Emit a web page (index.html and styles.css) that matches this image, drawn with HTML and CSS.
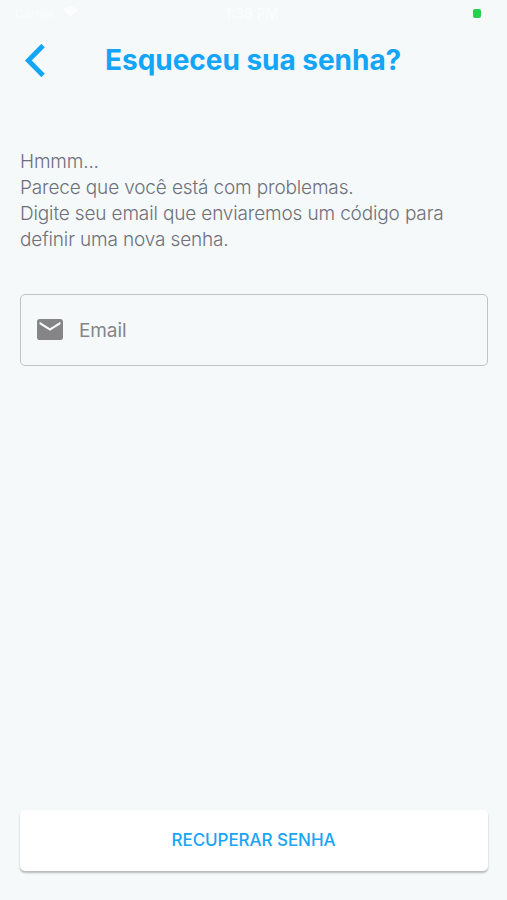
FILE: index.html
```html
<!DOCTYPE html>
<html lang="pt-BR">
<head>
<meta charset="utf-8">
<title>Esqueceu sua senha?</title>
<link rel="stylesheet" href="styles.css">
</head>
<body>
<div class="status"><span class="carrier">Carrier</span><svg class="wifi" viewBox="0 0 16 12"><path d="M0 4Q8-3 16 4L8 12Z"/></svg><span class="time">1:36 PM</span><span class="battery"></span></div>
<header class="header">
<svg class="back" viewBox="0 0 20 32"><path d="M18.300 1.500 4 16l14.300 14.500"/></svg>
<h1 class="title">Esqueceu sua senha?</h1>
</header>
<main class="main">
<p class="message"><span class="line">Hmmm...</span><span class="line">Parece que você está com problemas.</span><span class="line">Digite seu email que enviaremos um código para</span><span class="line">definir uma nova senha.</span></p>
<div class="field">
<svg class="mail" viewBox="2 4 20 16" preserveAspectRatio="none"><path d="M20 4H4c-1.100 0-2 .9-2 2v12c0 1.100.9 2 2 2h16c1.100 0 2-.9 2-2V6c0-1.100-.9-2-2-2zm0 4-8 5-8-5V6l8 5 8-5v2z"/></svg>
<span class="label">Email</span>
</div>
</main>
<button class="submit"><span class="submit-text">RECUPERAR SENHA</span></button>
</body>
</html>
```
FILE: styles.css
```css
* { box-sizing: border-box; }
body { margin: 0; height: 900px; display: flex; flex-direction: column; background: #f5f9fa; font-family: Inter, "Liberation Sans", sans-serif; overflow: hidden; }
.status { height: 26px; display: grid; grid-template-columns: 47px 128px 134px 1fr; align-items: center; padding-left: 15px; color: #fafdfd; font-size: 12px; }
.wifi { width: 17px; height: 11px; margin-bottom: 4px; fill: #fcfefe; }
.time { padding-left: 35px; font-size: 14px; font-weight: 600; white-space: nowrap; }
.battery { width: 8px; height: 9px; margin-left: 149px; background: #24d04c; border-radius: 2px; }
.header { height: 68px; display: flex; align-items: center; padding-left: 24px; }
.back { width: 21px; height: 33px; fill: none; stroke: #12a5f8; stroke-width: 4.7; }
.title { margin: 0 0 0 60px; font-size: 28px; line-height: 36px; font-weight: 700; letter-spacing: -.03px; color: #12a5f8; white-space: nowrap; }
.main { padding: 55.400px 19px 0 20px; }
.message { margin: 0; font-size: 19px; line-height: 25.750px; color: #6e707b; font-weight: 300; letter-spacing: -.15px; }
.line { display: block; white-space: nowrap; }
.field { margin-top: 41.600px; height: 72px; border: 1px solid #bfc4c5; border-radius: 5px; display: flex; align-items: center; padding-left: 16px; }
.mail { width: 26px; height: 21px; margin-bottom: 1px; fill: #858587; }
.label { margin-left: 16px; padding-top: 1px; font-size: 19px; letter-spacing: -.1px; color: #858587; }
.submit { margin: auto 19px 29px 20px; padding: 0 1px 2px 0; height: 61px; flex: none; border: 0; border-radius: 5px; background: #fff; box-shadow: 0 2px 2px rgba(0,0,0,.25); color: #18a5f5; font: 500 17px Inter, sans-serif; letter-spacing: -.06px; }
```
